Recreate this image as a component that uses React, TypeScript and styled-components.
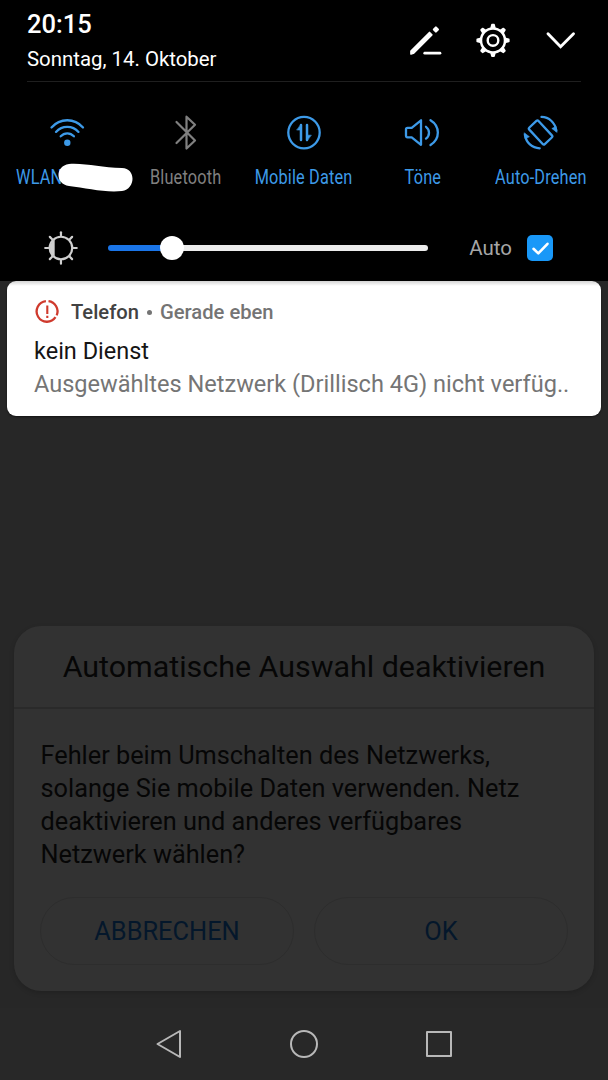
import React from "react";
import styled, { createGlobalStyle } from "styled-components";

const GlobalStyle = createGlobalStyle`
  *, *::before, *::after { box-sizing: border-box; }
  body { margin: 0; background: #272727; font-family: Roboto, "Liberation Sans", sans-serif; }
  svg { display: block; }
`;

const Screen = styled.div`
  width: 608px;
  height: 1080px;
  display: flex;
  flex-direction: column;
  background: #272727;
  overflow: hidden;
`;

const QuickPanel = styled.section`
  flex: none;
  height: 281px;
  background: #000;
  display: flex;
  flex-direction: column;
`;

const Header = styled.header`
  height: 82px;
  margin: 0 27px;
  border-bottom: 1px solid #1f1f1f;
  display: flex;
  justify-content: space-between;
`;

const DateBlock = styled.div`
  display: flex;
  flex-direction: column;
  padding-top: 9px;
  color: #fff;
`;

const Time = styled.div`
  font-size: 25.5px;
  line-height: 30px;
  font-weight: 500;
`;

const DateText = styled.div`
  margin-top: 7px;
  font-size: 20.4px;
  line-height: 26px;
  white-space: nowrap;
`;

const HeaderActions = styled.div`
  display: flex;
  gap: 28px;
  padding-top: 20px;
  height: 60px;
`;

const IconButton = styled.button`
  width: 40px;
  height: 40px;
  padding: 0;
  border: 0;
  background: none;
  color: #fff;
`;

const Tiles = styled.div`
  height: 132px;
  padding: 0 8px;
  display: grid;
  grid-template-columns: repeat(5, minmax(0, 1fr));
`;

const Tile = styled.div<{ $on?: boolean }>`
  position: relative;
  display: flex;
  flex-direction: column;
  align-items: center;
  padding-top: 31px;
  color: ${(p) => (p.$on ? "#3d9ae8" : "#808080")};
`;

const TileLabel = styled.div<{ $width?: number }>`
  flex: none;
  margin-top: 14px;
  width: ${(p) => (p.$width ? `${p.$width}px` : "auto")};
  font-size: 19.5px;
  line-height: 26px;
  letter-spacing: 0.2px;
  white-space: nowrap;
  transform: scaleX(0.835);
`;

const Redaction = styled.svg`
  position: absolute;
  left: 49px;
  top: 80px;
`;

const BrightnessRow = styled.div`
  flex: 1;
  display: flex;
  align-items: center;
  padding: 0 55px 0 44px;
`;

const Slider = styled.div`
  display: flex;
  align-items: center;
  width: 321px;
  height: 24px;
  margin-left: 30px;
`;

const Filled = styled.div`
  width: 54px;
  height: 6px;
  border-radius: 3px 0 0 3px;
  background: #1a75e8;
`;

const Thumb = styled.div`
  width: 24px;
  height: 24px;
  margin: 0 -2px;
  border-radius: 50%;
  background: #fff;
  z-index: 1;
`;

const Rest = styled.div`
  flex: 1;
  height: 6px;
  border-radius: 0 3px 3px 0;
  background: #ececec;
`;

const AutoLabel = styled.span`
  margin: 1px 0 0 41px;
  width: 58px;
  font-size: 20.5px;
  color: #a6a6a6;
`;

const CheckBox = styled.span`
  width: 26px;
  height: 26px;
  border-radius: 5px;
  background: #1998f8;
`;

const Notification = styled.article`
  flex: none;
  height: 135px;
  margin: 0 7px;
  padding: 17px 27px 0;
  border-radius: 9px;
  background: linear-gradient(#d4d4d4, #fff 5px);
  box-shadow: 0 1px 2px rgba(0, 0, 0, 0.5);
`;

const NotificationHead = styled.div`
  display: flex;
  align-items: center;
  height: 28px;
  font-size: 20.2px;
  font-weight: 500;
  color: #747474;
  white-space: nowrap;
`;

const AppName = styled.span`
  margin-left: 10px;
  color: #424242;
`;

const Dot = styled.span`
  width: 5px;
  height: 5px;
  margin: 1px 8px 0;
  border-radius: 50%;
  background: #747474;
`;

const NotificationTitle = styled.div`
  margin-top: 9px;
  font-size: 23.5px;
  line-height: 32px;
  color: #151515;
`;

const NotificationText = styled.div`
  margin-top: 1px;
  font-size: 23.55px;
  line-height: 32px;
  color: #757575;
  white-space: nowrap;
`;

const Dialog = styled.section`
  flex: none;
  height: 365px;
  margin: 210px 14px 0;
  border-radius: 27px;
  background: #323232;
  box-shadow: 0 2px 5px rgba(0, 0, 0, 0.16);
`;

const DialogTitle = styled.h1`
  margin: 0;
  height: 83px;
  border-bottom: 2px solid #2a2a2a;
  font-size: 30.4px;
  line-height: 82px;
  font-weight: 400;
  text-align: center;
  white-space: nowrap;
  color: #060606;
`;

const DialogText = styled.p`
  margin: 30px 0 0 26.5px;
  font-size: 25.3px;
  line-height: 33px;
  color: #060606;
  white-space: pre-line;
`;

const DialogButtons = styled.div`
  display: grid;
  grid-template-columns: 1fr 1fr;
  gap: 20px;
  padding: 26px 26px 0;
`;

const DialogButton = styled.button`
  height: 68px;
  padding: 0;
  border: 1px solid #2d2d2d;
  border-radius: 34px;
  background: none;
  font-family: inherit;
  font-size: 25.4px;
  color: #04172b;
`;

const NavBar = styled.nav`
  flex: none;
  height: 72px;
  margin-top: 17px;
  padding: 0 101px;
  display: grid;
  grid-template-columns: repeat(3, 1fr);
  justify-items: center;
  align-items: center;
  background: #282828;
`;

const iconProps = {
  fill: "none",
  stroke: "currentColor",
  strokeLinecap: "round" as const,
  strokeLinejoin: "round" as const,
};

const EditIcon = () => (
  <svg width="40" height="40" viewBox="0 0 40 40" {...iconProps}>
    <path d="M24.500 12.500 26.800 14.800 8.300 33.300 6 34 6 31z" fill="currentColor" strokeWidth="1.700" />
    <path d="m30.900 7.500 2 2-2 2-2-2z" fill="currentColor" strokeWidth="2.200" />
    <path d="M19.700 33.200h15.300" strokeWidth="2.700" />
  </svg>
);

const teeth = [0, 45, 90, 135, 180, 225, 270, 315];

const GearIcon = () => (
  <svg width="40" height="40" viewBox="0 0 40 40" {...iconProps}>
    <circle cx="20" cy="20.400" r="12" strokeWidth="2.500" />
    <circle cx="20" cy="20.400" r="5.300" strokeWidth="2.400" />
    {teeth.map((a) => (
      <path
        key={a}
        d="M18.300 7.600 19 4.700h2l.7 2.900z"
        fill="currentColor"
        strokeWidth="1.800"
        transform={`rotate(${a} 20 20.400)`}
      />
    ))}
  </svg>
);

const ChevronIcon = () => (
  <svg width="40" height="40" viewBox="0 0 40 40" {...iconProps}>
    <path d="m7 13.700 12.600 13 12.900-13" strokeWidth="2.900" strokeLinejoin="miter" />
  </svg>
);

const WifiIcon = () => (
  <svg width="38" height="38" viewBox="0 0 38 38" {...iconProps} strokeWidth="2.300">
    <path d="M3.500 14.500C12 4.800 26.500 4.800 35 14.500M8 18.900c6-6.800 16.500-6.800 22.500 0M12.700 23.300c3.700-4 9.500-4 13.200 0" />
    <circle cx="19.300" cy="29.700" r="3.200" fill="currentColor" stroke="none" />
  </svg>
);

const BluetoothIcon = () => (
  <svg width="38" height="38" viewBox="0 0 38 38" {...iconProps} strokeWidth="2.200">
    <path d="m9.500 9 18.500 18.500-8.500 8V3.700l8.500 8L9.500 30" />
  </svg>
);

const DataIcon = () => (
  <svg width="38" height="38" viewBox="0 0 38 38" {...iconProps} strokeWidth="2.300">
    <circle cx="19" cy="19.600" r="15.700" />
    <path d="M16 27V12M22 12v15" strokeWidth="2.500" />
    <path d="M16 11.500v5.500h-4zM22 27.700v-5.500h4z" fill="currentColor" strokeWidth="0.600" />
  </svg>
);

const SoundIcon = () => (
  <svg width="38" height="38" viewBox="0 0 38 38" {...iconProps} strokeWidth="2.300">
    <path d="M4.500 14.800h4.200L18 7.300v24.500l-9.300-7.500H4.500q-1.500 0-1.500-1.500v-6.500q0-1.500 1.500-1.500z" />
    <path d="M23 13.800c4 3 4 8.800 0 11.800M27.500 7.200c9.800 6 9.800 18.800 0 24.900" />
  </svg>
);

const RotateIcon = () => (
  <svg width="38" height="38" viewBox="0 0 38 38" {...iconProps} strokeWidth="2.300">
    <rect x="12.300" y="8.200" width="12.600" height="22.600" rx="1.500" transform="rotate(-43 18.600 19.500)" />
    <path d="M19.500 3.900C27 4 33 9.500 34.300 17.500M17.700 35.300C10 35.200 4.200 29.700 2.900 21.700" />
    <path d="m34.800 19.200-5-3.700 4-2zM2.400 20l5 3.700-4 2z" fill="currentColor" strokeWidth="0.600" />
  </svg>
);

const BrightnessIcon = () => (
  <svg width="34" height="34" viewBox="0 0 34 34" {...iconProps} color="#cfcfcf">
    <circle cx="17" cy="17" r="11.300" strokeWidth="2.200" />
    <path d="M10.700 8.400v17.200C4.500 21 4.500 13 10.700 8.400z" fill="currentColor" stroke="none" />
    {teeth.map((a) => (
      <path key={a} d="M17 4.500V1.200" strokeWidth="2.200" transform={`rotate(${a} 17 17)`} />
    ))}
  </svg>
);

const AlertIcon = () => (
  <svg width="27" height="28" viewBox="0 0 27 28" {...iconProps} strokeLinecap="butt" color="#cf3a2d">
    <path d="M14.500 3.200A10.300 10.300 0 0 1 22.700 17.400" strokeWidth="2.300" />
    <path d="M21.500 19.200A10.300 10.300 0 1 1 11.900 3.200" strokeWidth="2.300" />
    <path d="M13.300 7.500v8.500M13.300 17.700v2.300" strokeWidth="2.100" />
  </svg>
);

const tiles = [
  { label: "Bluetooth", icon: <BluetoothIcon />, on: false },
  { label: "Mobile Daten", icon: <DataIcon />, on: true },
  { label: "Töne", icon: <SoundIcon />, on: true },
  { label: "Auto-Drehen", icon: <RotateIcon />, on: true },
];

export default function App() {
  return (
    <Screen>
      <GlobalStyle />
      <QuickPanel>
        <Header>
          <DateBlock>
            <Time>20:15</Time>
            <DateText>Sonntag, 14. Oktober</DateText>
          </DateBlock>
          <HeaderActions>
            <IconButton aria-label="Bearbeiten"><EditIcon /></IconButton>
            <IconButton aria-label="Einstellungen"><GearIcon /></IconButton>
            <IconButton aria-label="Ausklappen"><ChevronIcon /></IconButton>
          </HeaderActions>
        </Header>
        <Tiles>
          <Tile $on>
            <WifiIcon />
            <TileLabel $width={122}>WLAN</TileLabel>
            <Redaction width="78" height="32" viewBox="0 0 78 32">
              <path d="M12 2C30 1 44 6 65 6c14 0 14 21 0 23-16 2-36-3-53-5C-2 22-2 4 12 2z" fill="#fff" />
            </Redaction>
          </Tile>
          {tiles.map((t) => (
            <Tile key={t.label} $on={t.on}>
              {t.icon}
              <TileLabel>{t.label}</TileLabel>
            </Tile>
          ))}
        </Tiles>
        <BrightnessRow>
          <BrightnessIcon />
          <Slider>
            <Filled />
            <Thumb />
            <Rest />
          </Slider>
          <AutoLabel>Auto</AutoLabel>
          <CheckBox>
            <svg width="26" height="26" viewBox="0 0 26 26" {...iconProps} stroke="#fff" strokeWidth="2.600">
              <path d="m6.500 13.800 4.800 4.600 9.200-9.600" />
            </svg>
          </CheckBox>
        </BrightnessRow>
      </QuickPanel>

      <Notification>
        <NotificationHead>
          <AlertIcon />
          <AppName>Telefon</AppName>
          <Dot />
          <span>Gerade eben</span>
        </NotificationHead>
        <NotificationTitle>kein Dienst</NotificationTitle>
        <NotificationText>Ausgewähltes Netzwerk (Drillisch 4G) nicht verfüg..</NotificationText>
      </Notification>

      <Dialog>
        <DialogTitle>Automatische Auswahl deaktivieren</DialogTitle>
        <DialogText>
          {"Fehler beim Umschalten des Netzwerks,\nsolange Sie mobile Daten verwenden. Netz\ndeaktivieren und anderes verfügbares\nNetzwerk wählen?"}
        </DialogText>
        <DialogButtons>
          <DialogButton>ABBRECHEN</DialogButton>
          <DialogButton>OK</DialogButton>
        </DialogButtons>
      </Dialog>

      <NavBar>
        <svg width="30" height="32" viewBox="0 0 30 32" {...iconProps} stroke="#b8b8b8" strokeWidth="2">
          <path d="M26 3v26L3.500 16z" />
        </svg>
        <svg width="30" height="32" viewBox="0 0 30 32" {...iconProps} stroke="#b8b8b8" strokeWidth="2">
          <circle cx="15" cy="16" r="13" />
        </svg>
        <svg width="30" height="32" viewBox="0 0 30 32" {...iconProps} stroke="#b8b8b8" strokeWidth="2">
          <rect x="3" y="4" width="24" height="24" />
        </svg>
      </NavBar>
    </Screen>
  );
}
